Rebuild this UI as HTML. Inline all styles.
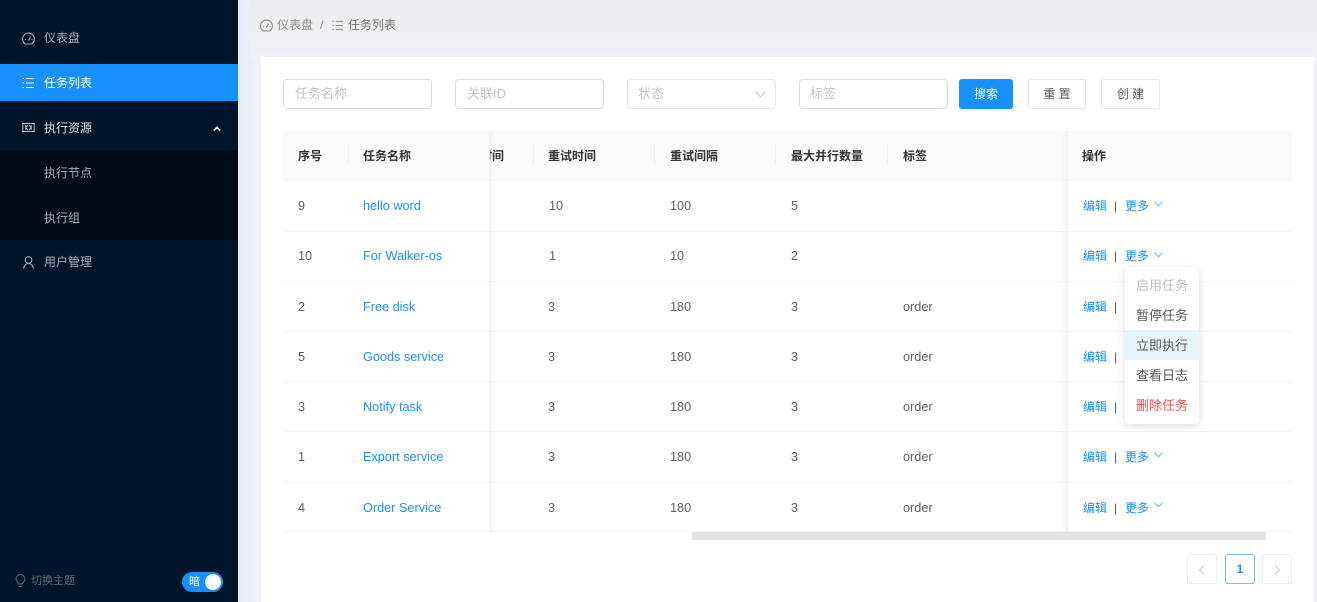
<!DOCTYPE html>
<html><head><meta charset="utf-8">
<style>
*{box-sizing:border-box;margin:0;padding:0}
html,body{width:1317px;height:602px;overflow:hidden;background:#f0f2f5}
body{position:relative;font-family:"Liberation Sans","Noto Sans CJK SC",sans-serif;font-size:12px;color:#595959}
.a{position:absolute;white-space:nowrap}
.t{position:absolute;white-space:nowrap;line-height:16px}
.side{position:absolute;left:0;top:0;width:238px;height:602px;background:#001529}
.m{color:#a6adb4}
.l{color:#1890ff}
.r{font-size:12.7px;color:#616161}
.r.l{color:#1890ff}
.th{font-weight:700;color:#333}
.inp{position:absolute;top:79px;height:30px;width:149px;border:1px solid #dcdcdc;border-radius:4px;background:#fff;color:#c4c4c4;line-height:28px;padding-left:11px;font-size:13px}
.btn{position:absolute;top:79px;height:30px;border-radius:3px;border:1px solid #e8e8e8;background:#fff;text-align:center;line-height:28px;color:#595959}
.hl{position:absolute;left:283px;width:1009px;height:1px;background:#f4f4f4}
.sep{position:absolute;top:145px;width:1px;height:20px;background:#f0f0f0}
svg{position:absolute;overflow:visible}
.pg{position:absolute;top:554px;width:30px;height:30px;border:1px solid #ebebeb;border-radius:3px;background:#fff}
.dd{position:absolute;left:1125px;top:267px;width:74px;height:157px;background:#fff;border-radius:4px;box-shadow:0 2px 8px rgba(0,0,0,.14)}
.dd div{position:absolute;left:0;width:74px;height:30px;line-height:30px;text-align:center;font-size:13px;color:#595959}
</style></head><body>
<div class="a" style="left:238px;top:0;width:1079px;height:602px;background:linear-gradient(90deg,#e8ebf4,#eff1f6 24px)"></div>
<div class="a" style="left:250px;top:0;width:1067px;height:60px;background:linear-gradient(#ebecef,#f0f1f6)"></div>
<div class="side"></div>
<div class="a" style="left:0;top:64px;width:238px;height:37px;background:#1890ff"></div>
<div class="a" style="left:0;top:150px;width:238px;height:90px;background:#000c17"></div>

<svg style="left:22px;top:32px" width="14" height="14" viewBox="0 0 14 14" fill="none" stroke="#a6adb4" stroke-width="1.1"><path d="M3.400 12A5.900 5.900 0 1 1 9.600 12Z"/><path d="M6.500 8.500L8.500 4.800M3 7.500H4M9.500 7.500H10.500"/></svg>
<div class="t m" style="left:44px;top:30px">仪表盘</div>
<svg style="left:22px;top:77px" width="13" height="12" viewBox="0 0 13 12" fill="none" stroke="#fff" stroke-width="1"><path d="M4 1.500H12M4 6H12M4 10.500H12M.5 1.500H2M.5 6H2M.5 10.500H2"/></svg>
<div class="t" style="left:44px;top:75px;color:#fff">任务列表</div>
<svg style="left:22px;top:123px" width="13" height="9" viewBox="0 0 13 9" fill="none" stroke="#b9bec3" stroke-width="1"><path d="M0 .5H13M0 8.500H13M.8 .5V8.500M12.200 .5V8.500M3.800 2V7M3.800 4.500L6 2M3.800 4.500L6 7M9.200 2V7M9.200 4.500L7 2M9.200 4.500L7 7"/></svg>
<div class="t" style="left:44px;top:120px;color:#dfe2e5">执行资源</div>
<svg style="left:213px;top:126px" width="8" height="6" viewBox="0 0 8 6" fill="none" stroke="#fff" stroke-width="1.800"><path d="M.8 4.500L4 1.500L7.200 4.500"/></svg>
<div class="t m" style="left:44px;top:165px">执行节点</div>
<div class="t m" style="left:44px;top:210px">执行组</div>
<svg style="left:23px;top:256px" width="11" height="13" viewBox="0 0 11 13" fill="none" stroke="#a6adb4" stroke-width="1.100"><circle cx="5.500" cy="4" r="3.300"/><path d="M.7 12.500C1 9.500 3 7.500 5.500 7.500S10 9.500 10.300 12.500"/></svg>
<div class="t m" style="left:44px;top:254px">用户管理</div>

<svg style="left:15px;top:574px" width="11" height="14" viewBox="0 0 11 14" fill="none" stroke="#5f6b76" stroke-width="1"><path d="M3.500 10C3.500 8 1 7.500 1 5A4.500 4.500 0 0 1 10 5C10 7.500 7.500 8 7.500 10ZM3.800 12.500H7.200"/></svg>
<div class="t" style="left:31px;top:573px;color:#5f6b76;font-size:11px">切换主题</div>
<div class="a" style="left:182px;top:572px;width:41px;height:20px;background:#1890ff;border-radius:10px"></div>
<div class="a" style="left:205px;top:574px;width:16px;height:16px;background:#fff;border-radius:50%"></div>
<div class="t" style="left:189px;top:574px;color:#fff;font-size:11px">暗</div>

<svg style="left:260px;top:19px" width="13" height="13" viewBox="0 0 13 13" fill="none" stroke="#8c8c8c" stroke-width="1.100"><path d="M3.400 12A5.900 5.900 0 1 1 9.600 12Z"/><path d="M6.500 8.500L8.500 4.800M3 7.500H4M9.500 7.500H10.500"/></svg>
<div class="t" style="left:277px;top:17px;color:#8c8c8c">仪表盘</div>
<div class="t" style="left:320px;top:17px;color:#8c8c8c">/</div>
<svg style="left:332px;top:20px" width="12" height="11" viewBox="0 0 13 12" fill="none" stroke="#8c8c8c" stroke-width="1"><path d="M4 1.500H12M4 6H12M4 10.500H12M.5 1.500H2M.5 6H2M.5 10.500H2"/></svg>
<div class="t" style="left:348px;top:17px;color:#737373">任务列表</div>

<div class="a" style="left:261px;top:57px;width:1053px;height:545px;background:#fff"></div>

<div class="inp" style="left:283px">任务名称</div>
<div class="inp" style="left:455px">关联ID</div>
<div class="inp" style="left:627px;border-color:#e8e8e8;padding-left:10px">状态</div>
<svg style="left:755px;top:91px" width="11" height="7" viewBox="0 0 11 7" fill="none" stroke="#bfbfbf" stroke-width="1"><path d="M.5 .7L5.500 5.700L10.500 .7"/></svg>
<div class="inp" style="left:799px;padding-left:10px">标签</div>
<div class="btn" style="left:959px;width:54px;background:#1890ff;border-color:#1890ff;color:#fff">搜索</div>
<div class="btn" style="left:1028px;width:58px">重 置</div>
<div class="btn" style="left:1101px;width:59px">创 建</div>

<div class="a" style="left:283px;top:131px;width:1009px;height:49px;background:#fafafa"></div>
<div class="hl" style="top:180px"></div>
<div class="hl" style="top:231px"></div>
<div class="hl" style="top:281px"></div>
<div class="hl" style="top:331px"></div>
<div class="hl" style="top:381px"></div>
<div class="hl" style="top:431px"></div>
<div class="hl" style="top:482px"></div>
<div class="hl" style="top:531px"></div>
<div class="a" style="left:489px;top:131px;width:6px;height:401px;background:linear-gradient(90deg,#f2f2f2,rgba(245,245,245,0))"></div>
<div class="a" style="left:1062px;top:131px;width:6px;height:401px;background:linear-gradient(270deg,#f2f2f2,rgba(245,245,245,0))"></div>
<div class="sep" style="left:348px"></div><div class="sep" style="left:533px"></div><div class="sep" style="left:654px"></div><div class="sep" style="left:775px"></div><div class="sep" style="left:887px"></div>

<div class="t th" style="left:298px;top:148px">序号</div>
<div class="t th" style="left:363px;top:148px">任务名称</div>
<div class="a" style="left:490px;top:148px;width:14px;overflow:hidden;height:16px;line-height:16px"><span class="th" style="position:absolute;right:0">时间</span></div>
<div class="t th" style="left:548px;top:148px">重试时间</div>
<div class="t th" style="left:670px;top:148px">重试间隔</div>
<div class="t th" style="left:791px;top:148px">最大并行数量</div>
<div class="t th" style="left:903px;top:148px">标签</div>
<div class="t th" style="left:1082px;top:148px">操作</div>

<div class="t r" style="left:298px;top:198px">9</div><div class="t r l" style="left:363px;top:198px">hello word</div><div class="t r" style="left:549px;top:198px">10</div><div class="t r" style="left:670px;top:198px">100</div><div class="t r" style="left:791px;top:198px">5</div>
<div class="t r" style="left:298px;top:248px">10</div><div class="t r l" style="left:363px;top:248px">For Walker-os</div><div class="t r" style="left:549px;top:248px">1</div><div class="t r" style="left:670px;top:248px">10</div><div class="t r" style="left:791px;top:248px">2</div>
<div class="t r" style="left:298px;top:299px">2</div><div class="t r l" style="left:363px;top:299px">Free disk</div><div class="t r" style="left:548px;top:299px">3</div><div class="t r" style="left:670px;top:299px">180</div><div class="t r" style="left:791px;top:299px">3</div><div class="t r" style="left:903px;top:299px">order</div>
<div class="t r" style="left:298px;top:349px">5</div><div class="t r l" style="left:363px;top:349px">Goods service</div><div class="t r" style="left:548px;top:349px">3</div><div class="t r" style="left:670px;top:349px">180</div><div class="t r" style="left:791px;top:349px">3</div><div class="t r" style="left:903px;top:349px">order</div>
<div class="t r" style="left:298px;top:399px">3</div><div class="t r l" style="left:363px;top:399px">Notify task</div><div class="t r" style="left:548px;top:399px">3</div><div class="t r" style="left:670px;top:399px">180</div><div class="t r" style="left:791px;top:399px">3</div><div class="t r" style="left:903px;top:399px">order</div>
<div class="t r" style="left:298px;top:449px">1</div><div class="t r l" style="left:363px;top:449px">Export service</div><div class="t r" style="left:548px;top:449px">3</div><div class="t r" style="left:670px;top:449px">180</div><div class="t r" style="left:791px;top:449px">3</div><div class="t r" style="left:903px;top:449px">order</div>
<div class="t r" style="left:298px;top:500px">4</div><div class="t r l" style="left:363px;top:500px">Order Service</div><div class="t r" style="left:548px;top:500px">3</div><div class="t r" style="left:670px;top:500px">180</div><div class="t r" style="left:791px;top:500px">3</div><div class="t r" style="left:903px;top:500px">order</div>

<div class="t l" style="left:1083px;top:198px">编辑</div><div class="t" style="left:1114px;top:198px">|</div><div class="t l" style="left:1125px;top:198px">更多</div>
<svg style="left:1154px;top:201px" width="9" height="6" viewBox="0 0 9 6" fill="none" stroke="#5aaeff" stroke-width=".9"><path d="M.5 .7L4.500 4.700L8.500 .7"/></svg>
<div class="t l" style="left:1083px;top:248px">编辑</div><div class="t" style="left:1114px;top:248px">|</div><div class="t l" style="left:1125px;top:248px">更多</div>
<svg style="left:1154px;top:252px" width="9" height="6" viewBox="0 0 9 6" fill="none" stroke="#5aaeff" stroke-width=".9"><path d="M.5 .7L4.500 4.700L8.500 .7"/></svg>
<div class="t l" style="left:1083px;top:299px">编辑</div><div class="t" style="left:1114px;top:299px">|</div>
<div class="t l" style="left:1083px;top:349px">编辑</div><div class="t" style="left:1114px;top:349px">|</div>
<div class="t l" style="left:1083px;top:399px">编辑</div><div class="t" style="left:1114px;top:399px">|</div>
<div class="t l" style="left:1083px;top:449px">编辑</div><div class="t" style="left:1114px;top:449px">|</div><div class="t l" style="left:1125px;top:449px">更多</div>
<svg style="left:1154px;top:452px" width="9" height="6" viewBox="0 0 9 6" fill="none" stroke="#5aaeff" stroke-width=".9"><path d="M.5 .7L4.500 4.700L8.500 .7"/></svg>
<div class="t l" style="left:1083px;top:500px">编辑</div><div class="t" style="left:1114px;top:500px">|</div><div class="t l" style="left:1125px;top:500px">更多</div>
<svg style="left:1154px;top:502px" width="9" height="6" viewBox="0 0 9 6" fill="none" stroke="#5aaeff" stroke-width=".9"><path d="M.5 .7L4.500 4.700L8.500 .7"/></svg>

<div class="dd">
<div style="top:4px;color:#bfbfbf">启用任务</div>
<div style="top:34px">暂停任务</div>
<div style="top:63px;height:30px;line-height:32px;background:#e6f4fc">立即执行</div>
<div style="top:94px">查看日志</div>
<div style="top:124px;color:#ff4d4f">删除任务</div>
</div>

<div class="a" style="left:692px;top:532px;width:574px;height:8px;background:#e2e2e2"></div>

<div class="pg" style="left:1187px"></div>
<svg style="left:1198px;top:565px" width="7" height="10" viewBox="0 0 7 10" fill="none" stroke="#c8c8c8" stroke-width="1"><path d="M6 .5L1.500 5L6 9.500"/></svg>
<div class="pg" style="left:1225px;border-color:#7cbcf9;color:#1890ff;font-weight:700;text-align:center;line-height:28px">1</div>
<div class="pg" style="left:1262px"></div>
<svg style="left:1274px;top:565px" width="7" height="10" viewBox="0 0 7 10" fill="none" stroke="#c8c8c8" stroke-width="1"><path d="M1 .5L5.500 5L1 9.500"/></svg>
</body></html>
